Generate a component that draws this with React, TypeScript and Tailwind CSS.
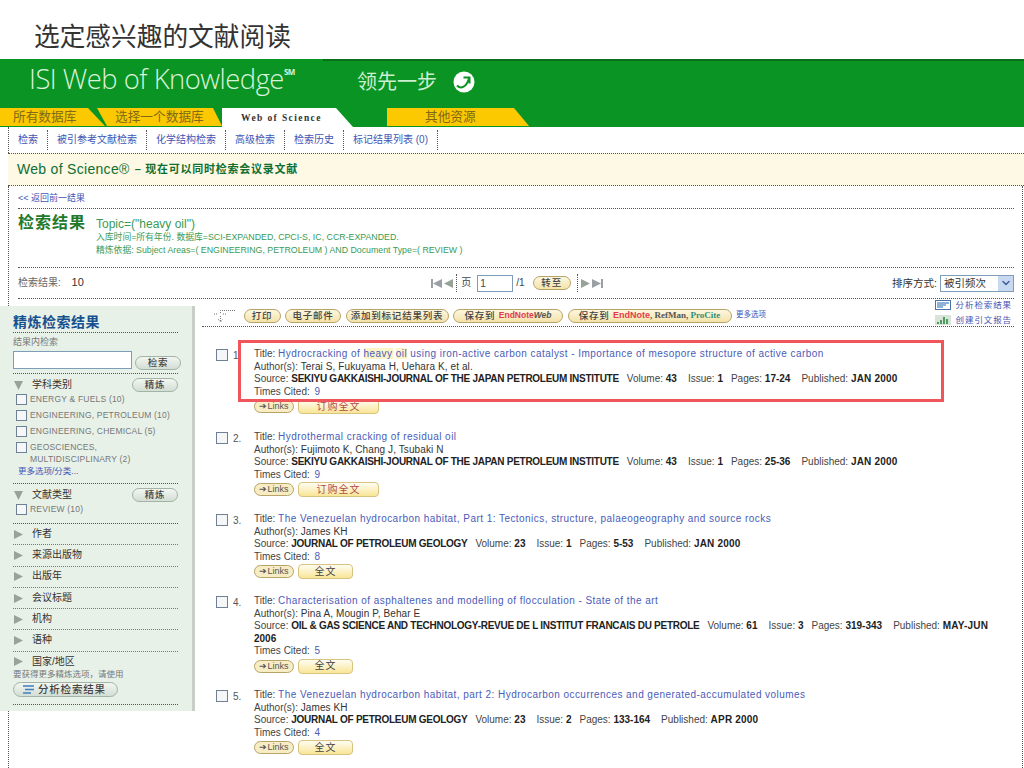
import { ChevronDown } from 'lucide-react';

const dotted = 'border-b border-dotted border-[#555]';

function Pill({ children, className = '', green }: { children: React.ReactNode; className?: string; green?: boolean }) {
  const tone = green
    ? 'border-[#a3b3a6] bg-linear-to-b from-[#f2f6f2] to-[#d3ded4]'
    : 'border-[#b9a468] bg-linear-to-b from-[#fdf7e0] to-[#f4e2a8]';
  return (
    <span className={`inline-flex items-center justify-center h-[14px] rounded-full border text-[9.5px] leading-none tracking-[0.8px] text-[#444] font-medium whitespace-nowrap ${tone} ${className}`}>
      {children}
    </span>
  );
}

function Triangle({ dir }: { dir: 'left' | 'right' | 'down' }) {
  const points = dir === 'left' ? '9,0 9,9 0,4.5' : dir === 'right' ? '0,0 9,4.5 0,9' : '0,0 9,0 4.5,9';
  return (
    <svg width="9" height="9" viewBox="0 0 9 9" className="shrink-0">
      <polygon points={points} fill="#97a399" />
    </svg>
  );
}

function EndCap({ dir }: { dir: 'left' | 'right' }) {
  return (
    <span className={`flex items-center ${dir === 'right' ? 'flex-row-reverse' : ''}`}>
      <span className="w-[2px] h-[9px] bg-[#9aa0a6]" />
      <svg width="9" height="9" viewBox="0 0 9 9">
        <polygon points={dir === 'left' ? '9,0 9,9 0,4.5' : '0,0 9,4.5 0,9'} fill="#9aa0a6" />
      </svg>
    </span>
  );
}

function Check({ className = '' }: { className?: string }) {
  return <span className={`block w-[11px] h-[11px] border border-[#6f7f94] bg-[#f4f6f8] shrink-0 ${className}`} />;
}

function FacetItem({ label, h = 16 }: { label: React.ReactNode; h?: number }) {
  return (
    <div className="flex items-start gap-[3px] pl-[3px] text-[8.5px] leading-[12px] tracking-[0.2px] text-[#777]" style={{ height: h }}>
      <Check className="mt-px" />
      <span>{label}</span>
    </div>
  );
}

function FacetHead({ label, refine }: { label: string; refine?: boolean }) {
  return (
    <div className={`flex items-center text-[10px] text-[#333] ${refine ? 'h-[19px] pt-[3px]' : 'h-[20.3px]'}`}>
      <span className="w-[19px] pl-[1px]"><Triangle dir={refine ? 'down' : 'right'} /></span>
      <span className="flex-1">{label}</span>
      {refine && <Pill green className="w-[46px] h-[13px]">精炼</Pill>}
    </div>
  );
}

function Closed({ label, last }: { label: string; last?: boolean }) {
  return (
    <div className={last ? '' : `${dotted} border-[#777]`}>
      <FacetHead label={label} />
    </div>
  );
}

function Sidebar() {
  return (
    <aside className="relative z-10 -ml-[18px] mt-[7px] w-[195px] h-[405px] shrink-0 bg-[#e8f1e8] border-r-[3px] border-[#c9cec9] pl-[13px] pr-[14px] pt-[7px]">
      <div className={`h-[20px] text-[14px] leading-[19px] font-bold tracking-[0.5px] text-[#17508f] ${dotted}`}>精炼检索结果</div>
      <div className="h-[18px] text-[9px] leading-[18px] text-[#777]">结果内检索</div>
      <div className={`flex items-start justify-between h-[23px] ${dotted}`}>
        <span className="w-[119px] h-[18px] border border-[#7f9db9] bg-white" />
        <Pill green className="w-[46px] h-[13px] mt-[5px] -mr-[3px]">检索</Pill>
      </div>
      <FacetHead label="学科类别" refine />
      <FacetItem label="ENERGY & FUELS (10)" />
      <FacetItem label="ENGINEERING, PETROLEUM (10)" />
      <FacetItem label="ENGINEERING, CHEMICAL (5)" />
      <FacetItem h={24} label={<>GEOSCIENCES,<br />MULTIDISCIPLINARY (2)</>} />
      <div className={`h-[19px] pl-[5px] text-[8.5px] leading-[13px] text-[#3f55b5] ${dotted}`}>更多选项/分类...</div>
      <FacetHead label="文献类型" refine />
      <div className={`h-[21px] ${dotted}`}>
        <FacetItem label="REVIEW (10)" />
      </div>
      <Closed label="作者" />
      <Closed label="来源出版物" />
      <Closed label="出版年" />
      <Closed label="会议标题" />
      <Closed label="机构" />
      <Closed label="语种" />
      <Closed label="国家/地区" last />
      <div className="text-[8.5px] leading-[10px] -mt-[3px] text-[#777]">要获得更多精炼选项，请使用</div>
      <div className={`h-[26px] pt-[3px] ${dotted}`}>
        <span className="inline-flex items-center gap-[4px] w-[105px] h-[15px] pl-[9px] rounded-full border border-[#a3b3a6] bg-linear-to-b from-[#f2f6f2] to-[#d3ded4] text-[10.5px] leading-none font-medium tracking-[0.8px] text-[#444]">
          <svg width="11" height="9" viewBox="0 0 11 9"><path d="M0 1h11M2 4.5h9M0 8h8" stroke="#3d7fc0" strokeWidth="1.6" /></svg>
          分析检索结果
        </span>
      </div>
    </aside>
  );
}

function Row({ label, children }: { label: string; children: React.ReactNode }) {
  return <div className="whitespace-nowrap"><span className="text-[#444]">{label}: </span>{children}</div>;
}

function Bold({ children }: { children: React.ReactNode }) {
  return <b className="font-bold text-[#222]">{children}</b>;
}

function Meta({ volume, issue, pages, published }: { volume: string; issue: string; pages: string; published: string }) {
  return (
    <span className="text-[#444]">
      <span className="ml-[8px]">Volume: <Bold>{volume}</Bold></span>
      <span className="ml-[11px]">Issue: <Bold>{issue}</Bold></span>
      <span className="ml-[8px]">Pages: <Bold>{pages}</Bold></span>
      <span className="ml-[11px]">Published: <span className="tracking-[0.2px]"><Bold>{published}</Bold></span></span>
    </span>
  );
}

type Result = {
  n: number;
  title: React.ReactNode;
  authors: string;
  journal: string;
  volume: string;
  issue: string;
  pages: string;
  published: string;
  cited: number;
  full: string;
  wrap?: boolean;
};

const results: Result[] = [
  {
    n: 1,
    title: <>Hydrocracking of <span className="bg-[#fdf3c8]">heavy</span> <span className="bg-[#fdf3c8]">oil</span> using iron-active carbon catalyst - Importance of mesopore structure of active carbon</>,
    authors: 'Terai S, Fukuyama H, Uehara K, et al.',
    journal: 'SEKIYU GAKKAISHI-JOURNAL OF THE JAPAN PETROLEUM INSTITUTE',
    volume: '43', issue: '1', pages: '17-24', published: 'JAN 2000', cited: 9, full: '订购全文',
  },
  {
    n: 2,
    title: 'Hydrothermal cracking of residual oil',
    authors: 'Fujimoto K, Chang J, Tsubaki N',
    journal: 'SEKIYU GAKKAISHI-JOURNAL OF THE JAPAN PETROLEUM INSTITUTE',
    volume: '43', issue: '1', pages: '25-36', published: 'JAN 2000', cited: 9, full: '订购全文',
  },
  {
    n: 3,
    title: 'The Venezuelan hydrocarbon habitat, Part 1: Tectonics, structure, palaeogeography and source rocks',
    authors: 'James KH',
    journal: 'JOURNAL OF PETROLEUM GEOLOGY',
    volume: '23', issue: '1', pages: '5-53', published: 'JAN 2000', cited: 8, full: '全文',
  },
  {
    n: 4,
    title: 'Characterisation of asphaltenes and modelling of flocculation - State of the art',
    authors: 'Pina A, Mougin P, Behar E',
    journal: 'OIL & GAS SCIENCE AND TECHNOLOGY-REVUE DE L INSTITUT FRANCAIS DU PETROLE',
    volume: '61', issue: '3', pages: '319-343', published: 'MAY-JUN', cited: 5, full: '全文', wrap: true,
  },
  {
    n: 5,
    title: 'The Venezuelan hydrocarbon habitat, part 2: Hydrocarbon occurrences and generated-accumulated volumes',
    authors: 'James KH',
    journal: 'JOURNAL OF PETROLEUM GEOLOGY',
    volume: '23', issue: '2', pages: '133-164', published: 'APR 2000', cited: 4, full: '全文',
  },
];

function ResultItem({ r }: { r: Result }) {
  return (
    <div className={`relative flex ${r.wrap ? 'h-[94px]' : r.n === 1 ? 'h-[83px]' : 'h-[82px]'}`}>
      <Check className="ml-[11px] w-[12px] h-[12px] mt-[1px]" />
      <span className="w-[26px] pl-[5px] text-[#555] leading-[16px]">{r.n}.</span>
      <div className="flex-1">
        <Row label="Title"><span className="text-[#4a5cb8] tracking-[0.45px]">{r.title}</span></Row>
        <Row label="Author(s)"><span className="text-[#333] tracking-[0.1px]">{r.authors}</span></Row>
        <Row label="Source">
          <span className="tracking-[-0.27px]"><Bold>{r.journal}</Bold></span>
          <Meta volume={r.volume} issue={r.issue} pages={r.pages} published={r.published} />
        </Row>
        {r.wrap && <div><Bold>2006</Bold></div>}
        <Row label="Times Cited"><span className="text-[#4a5cb8] ml-[2px]">{r.cited}</span></Row>
        <div className="flex items-center gap-[4px] mt-[1px]">
          <span className="inline-flex items-center justify-center w-[40px] h-[13px] rounded-full border border-[#b9a468] bg-[#f8ecc4] text-[9px] leading-none text-[#555]">➔Links</span>
          <span className={`inline-flex items-center justify-center h-[15px] rounded-[4px] border border-[#d8c47f] bg-linear-to-b from-[#fffdf2] to-[#f9e595] text-[10px] leading-none tracking-[1px] ${r.n < 3 ? 'w-[81px] text-[#b04a4a]' : 'w-[55px] text-[#444]'}`}>{r.full}</span>
        </div>
      </div>
      {r.n === 1 && <div className="absolute left-[33px] top-[-8px] w-[706px] h-[62px] border-[3px] border-[#f0555b]" />}
    </div>
  );
}

function Tabs() {
  return (
    <div className="flex h-[19px] mt-auto items-start text-[12.7px] leading-[18px]">
      <div className="w-[105px] h-[18px] -mr-[8px] bg-[#fcc800] pl-[13px] text-[#806a18] [clip-path:polygon(0_0,88px_0,105px_100%,0_100%)]">所有数据库</div>
      <div className="w-[125px] h-[18px] bg-[#fcc800] pl-[18px] text-[#806a18] [clip-path:polygon(0_0,116px_0,125px_100%,10px_100%)]">选择一个数据库</div>
      <div className="w-[131px] h-[19px] bg-white pl-[19px] pt-[1px] text-[9.5px] font-bold tracking-[1.4px] text-[#333] [clip-path:polygon(0_0,114px_0,131px_100%,0_100%)] [font-family:'Liberation_Serif',serif]">Web of Science</div>
      <div className="ml-[34px] w-[142px] h-[18px] bg-[#fcc800] pl-[38px] text-[#806a18] [clip-path:polygon(0_0,127px_0,142px_100%,0_100%)]">其他资源</div>
    </div>
  );
}

export default function App() {
  const navItems = ['检索', '被引参考文献检索', '化学结构检索', '高级检索', '检索历史', '标记结果列表 (0)'];
  const font = "[font-family:'Liberation_Sans','Noto_Sans_CJK_SC',sans-serif]";

  return (
    <div className={`w-[1024px] h-[768px] overflow-hidden bg-white text-[10px] leading-[12.6px] ${font}`}>
      {/* slide title */}
      <div className="h-[59px] pl-[34px] pt-[19px] text-[25.7px] leading-[36px] text-[#333]">选定感兴趣的文献阅读</div>

      {/* banner */}
      <header className="h-[68px] bg-[#0a9423] flex flex-col">
        <div className="h-[2px] ml-[323px] bg-[#0a6e1a] shrink-0" />
        <div className="flex items-center pl-[29px] h-[36px] text-white">
          <span className="w-[300px] text-[27.4px] leading-[36px] font-light text-[#d9f2dc] [font-family:'Open_Sans',sans-serif] tracking-[-0.5px]">ISI Web of Knowledge<sup className="text-[8px] font-bold align-super">SM</sup></span>
          <span className="ml-[28px] mt-[6px] text-[20px] leading-none text-[#cdeed0]">领先一步</span>
          <svg width="22" height="22" viewBox="0 0 22 22" className="ml-[16px] mt-[6px]">
            <circle cx="11" cy="11" r="10.5" fill="#fff" />
            <path d="M4 14.5c3.5 3.5 9 2.5 12-7M10.5 6.5h6v6" fill="none" stroke="#0a9423" strokeWidth="2" />
          </svg>
        </div>
        <Tabs />
      </header>

      {/* sub nav */}
      <nav className="flex h-[26px] ml-[8px] pt-[3px] text-[10px] leading-[20px] text-[#3f55b5] border-l border-dotted border-[#555]">
        {navItems.map(item => (
          <span key={item} className="h-[20px] px-[9px] border-r border-dotted border-[#555] whitespace-nowrap">{item}</span>
        ))}
      </nav>

      {/* notice band */}
      <div className="ml-[8px] h-[33px] flex items-center pl-[9px] gap-[5px] bg-[#fdf9e4] border-y border-dotted border-[#555] text-[#0f6e32]">
        <span className="text-[14px] tracking-[0.3px]">Web of Science®</span>
        <span className="text-[11px] font-bold tracking-[0.75px]">– 现在可以同时检索会议录文献</span>
      </div>

      {/* main box */}
      <main className="ml-[8px] mr-[1px] h-[600px] border-l border-r border-dotted border-[#555] pl-[9px] pr-[8px]">
        <div className={`h-[23px] pt-[6px] text-[9px] leading-[12px] text-[#3f55b5] ${dotted}`}>&lt;&lt; 返回前一结果</div>

        <div className={`h-[59px] flex pt-[3px] ${dotted}`}>
          <span className="w-[78px] text-[16px] leading-[22px] font-bold tracking-[1px] text-[#1f7a2c]">检索结果</span>
          <div className="text-[#3a9a55] pt-[5px]">
            <div className="text-[12px] leading-[14px]">Topic=("heavy oil")</div>
            <div className="text-[8.8px] leading-[13px]">入库时间=所有年份. 数据库=SCI-EXPANDED, CPCI-S, IC, CCR-EXPANDED.</div>
            <div className="text-[8.8px] leading-[13px]">精炼依据: Subject Areas=( ENGINEERING, PETROLEUM ) AND Document Type=( REVIEW )</div>
          </div>
        </div>

        <div className={`h-[31px] flex items-center justify-between ${dotted}`}>
          <span className="w-[200px] text-[#666]">检索结果: <span className="ml-[8px] text-[11px] text-[#333]">10</span></span>
          <div className="flex items-center text-[10px] text-[#444] ml-[2px]">
            <span className="flex items-center gap-[2px]"><EndCap dir="left" /><Triangle dir="left" /></span>
            <span className="ml-[3px] h-[18px] border-l border-dotted border-[#555]" />
            <span className="ml-[4px]">页</span>
            <span className="ml-[6px] w-[36px] h-[17px] pl-[2px] border border-[#7f9db9] leading-[15px]">1</span>
            <span className="ml-[3px]">/1</span>
            <Pill className="ml-[8px] w-[38px]">转至</Pill>
            <span className="ml-[6px] h-[18px] border-l border-dotted border-[#555]" />
            <span className="ml-[3px] flex items-center gap-[2px]"><Triangle dir="right" /><EndCap dir="right" /></span>
          </div>
          <div className="w-[200px] flex items-center justify-end gap-[3px] text-[10.5px] text-[#333]">
            排序方式:
            <span className="flex items-center justify-between w-[74px] h-[17px] pl-[3px] border border-[#7f9db9] text-[10.5px] leading-[15px]">
              被引频次
              <span className="flex items-center justify-center w-[15px] h-[15px] bg-[#c8d8f0]"><ChevronDown size={12} strokeWidth={3} color="#41619c" /></span>
            </span>
          </div>
        </div>

        <div className="flex">
          <Sidebar />
          <section className="ml-[7px] flex-1">
            {/* toolbar */}
            <div className={`h-[28px] flex items-center justify-between ${dotted} pl-[11px] pr-[2px]`}>
              <div className="flex items-center gap-[4.5px] mt-[6px]">
                <svg width="22" height="14" viewBox="0 0 22 14" className="mr-[4px]">
                  <path d="M7.5 4V1.5H22M1 5h4M10 5h4M7.5 7v5M5 10l2.5 3 2.5-3" fill="none" stroke="#777" strokeDasharray="1 1" />
                </svg>
                <Pill className="w-[37px]">打印</Pill>
                <Pill className="w-[56px]">电子邮件</Pill>
                <Pill className="w-[103px] tracking-[0.6px]">添加到标记结果列表</Pill>
                <Pill className="w-[110px]">保存到&nbsp;<span className="text-[8.5px] font-bold tracking-normal text-[#e23c4a]">EndNote</span><span className="text-[8.5px] font-bold tracking-normal text-[#555] italic">Web</span></Pill>
                <Pill className="w-[164px]">保存到&nbsp;<span className="text-[9px] font-bold tracking-normal text-[#e23c4a]">EndNote</span><span className="text-[9px] tracking-normal text-[#555] font-bold [font-family:'Liberation_Serif',serif]">, RefMan, <span className="text-[#2e8f7a]">ProCite</span></span></Pill>
                <span className="text-[7.5px] text-[#3f55b5]">更多选项</span>
              </div>
              <div className="flex flex-col items-end text-[8.5px] leading-[15px] tracking-[0.9px] text-[#3f55b5]">
                <span className="flex items-center gap-[5px]">
                  <svg width="16" height="10" viewBox="0 0 16 10"><rect x=".5" y=".5" width="15" height="9" fill="#fff" stroke="#4a73a8" /><path d="M2 3h12M2 5h9M2 7h6" stroke="#1f64b0" /></svg>
                  分析检索结果
                </span>
                <span className="flex items-center gap-[5px]">
                  <svg width="16" height="10" viewBox="0 0 16 10"><rect width="16" height="10" fill="#d7e4d7" /><path d="M3 9V7M6 9V5M9 9V2M12 9V4" stroke="#2f8a45" strokeWidth="1.6" /></svg>
                  创建引文报告
                </span>
              </div>
            </div>
            <div className="pt-[21px] pl-[3px]">
              {results.map(r => <ResultItem key={r.n} r={r} />)}
            </div>
          </section>
        </div>
      </main>
    </div>
  );
}
